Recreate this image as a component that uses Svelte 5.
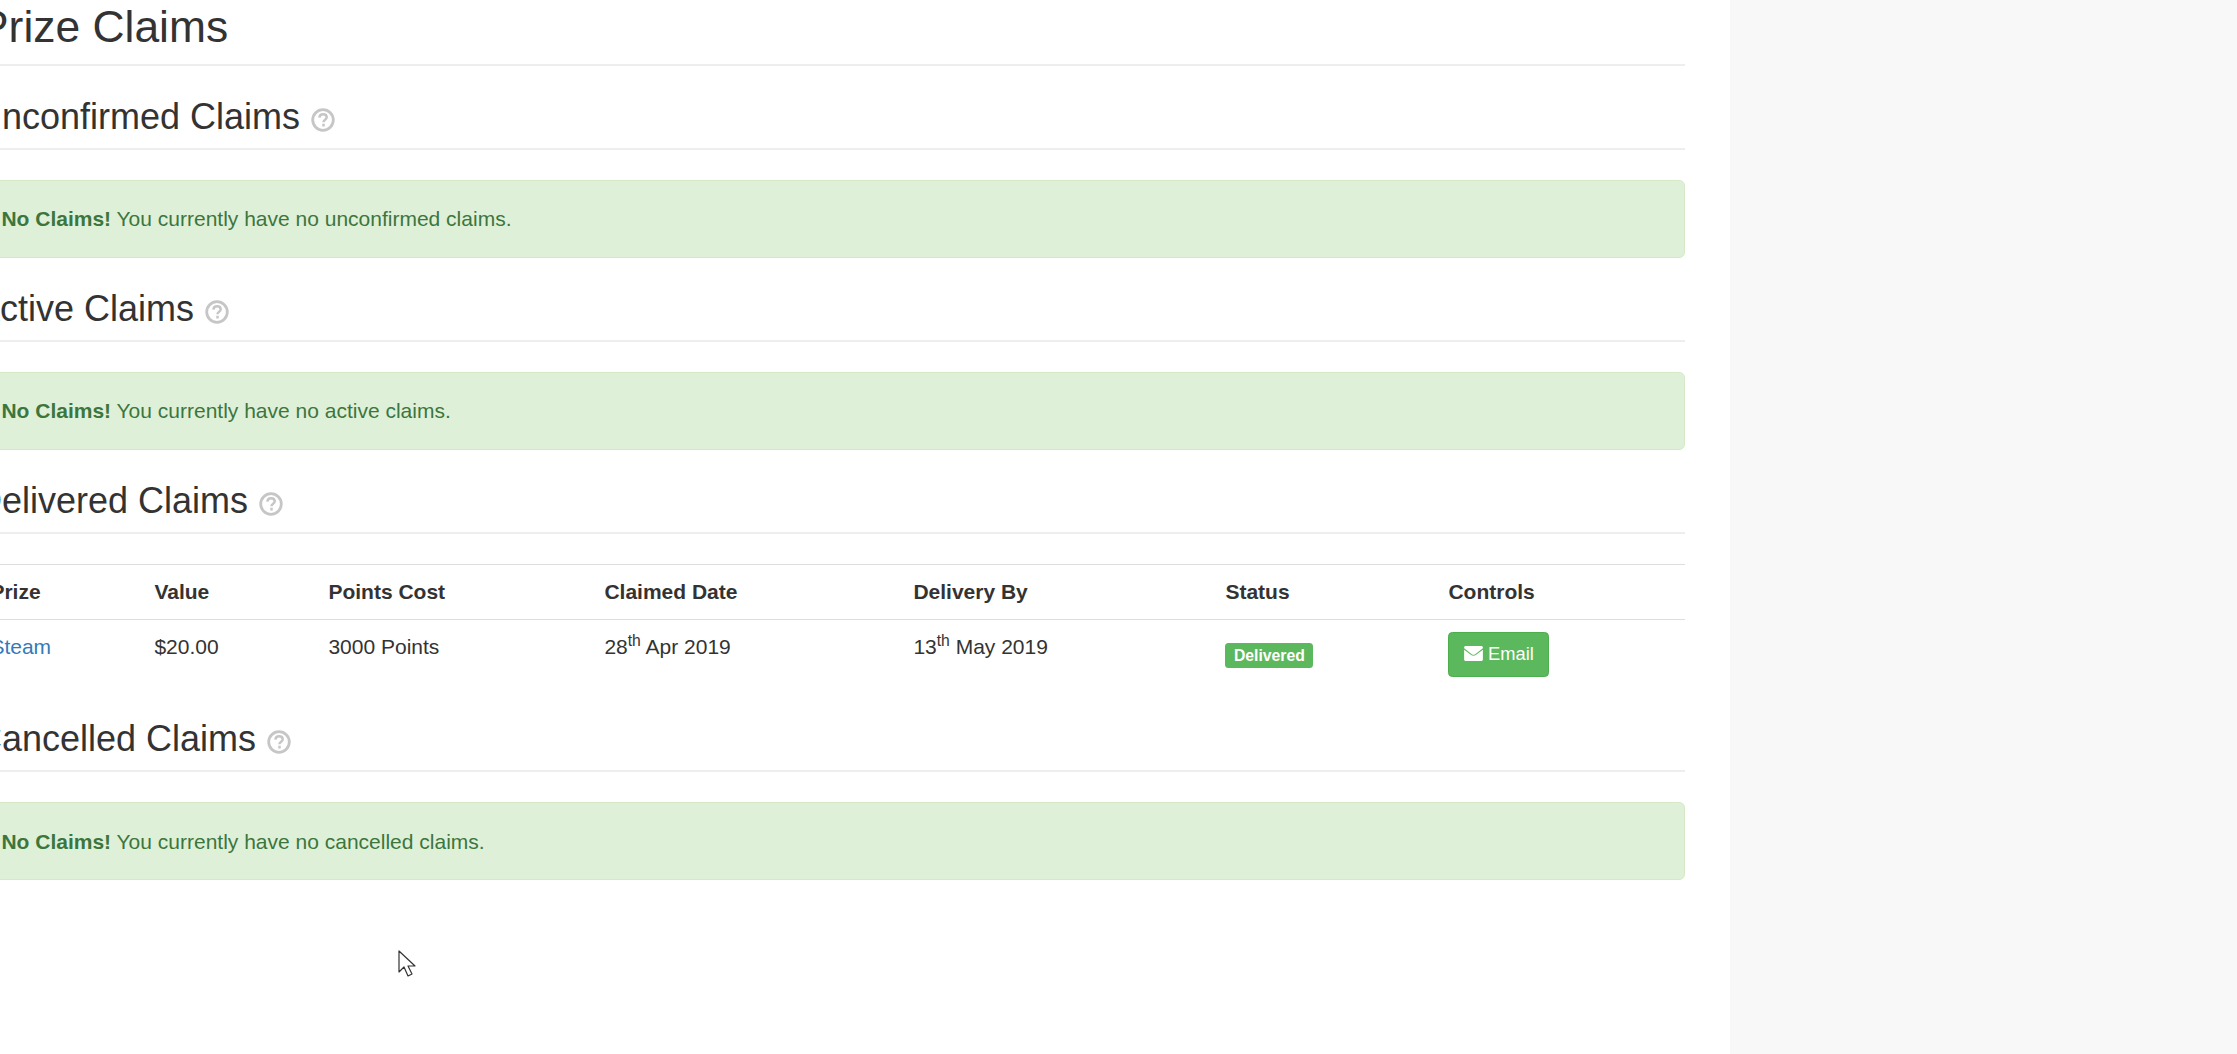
<script>
  const claims = [
    { kind: 'alert', title: 'Unconfirmed Claims', msg: 'You currently have no unconfirmed claims.' },
    { kind: 'alert', title: 'Active Claims', msg: 'You currently have no active claims.' },
    { kind: 'table', title: 'Delivered Claims' },
    { kind: 'alert', title: 'Cancelled Claims', msg: 'You currently have no cancelled claims.' }
  ];
  const heads = ['Prize', 'Value', 'Points Cost', 'Claimed Date', 'Delivery By', 'Status', 'Controls'];
</script>

<div class="page">
  <main class="main">
    <div class="content">
      <h2 class="page-title">Prize Claims</h2>
      {#each claims as c}
        <section class="group">
          <h3 class="sub-title">
            {c.title}
            <svg class="help" viewBox="0 0 24 24" aria-hidden="true">
              <circle cx="12" cy="12" r="10.3" fill="none" stroke="#c6c6c6" stroke-width="2.8" />
              <path d="M8.4 9.6c.2-2 1.7-3.3 3.7-3.3 2.1 0 3.6 1.2 3.6 3 0 1.3-.7 2-1.8 2.7-1 .7-1.4 1.2-1.4 2.3M12.5 15.8v2.6" fill="none" stroke="#c6c6c6" stroke-width="2.5" />
            </svg>
          </h3>
          {#if c.kind === 'alert'}
            <div class="alert"><strong>No Claims!</strong> {c.msg}</div>
          {:else}
            <table class="table">
              <thead>
                <tr>{#each heads as h}<th>{h}</th>{/each}</tr>
              </thead>
              <tbody>
                <tr>
                  <td><a href="#steam">Steam</a></td>
                  <td>$20.00</td>
                  <td>3000 Points</td>
                  <td>28<sup>th</sup> Apr 2019</td>
                  <td>13<sup>th</sup> May 2019</td>
                  <td><span class="label">Delivered</span></td>
                  <td>
                    <button class="btn">
                      <svg class="env" viewBox="0 0 20 16" aria-hidden="true">
                        <path d="M0 1.6C0 .7.7 0 1.6 0h16.8c.9 0 1.6.7 1.6 1.6v.9l-8.2 6.2c-1.1.8-2.5.8-3.6 0L0 2.5z" fill="#fff" />
                        <path d="M0 4v10.4c0 .9.7 1.6 1.6 1.6h16.8c.9 0 1.6-.7 1.6-1.6V4l-7.6 5.7c-1.4 1-3.4 1-4.8 0z" fill="#fff" />
                      </svg>
                      Email
                    </button>
                  </td>
                </tr>
              </tbody>
            </table>
          {/if}
        </section>
      {/each}
    </div>
    <svg class="cursor" viewBox="0 0 18 28" aria-hidden="true">
      <path d="M1 1v21l5-5 4 9 4-2-4-8h7z" fill="#fff" stroke="#333" stroke-width="1.2" stroke-linejoin="round" />
    </svg>
  </main>
  <aside class="side"></aside>
</div>

<style>
  :global(body) {
    margin: 0;
    background: #fff;
    font-family: "Liberation Sans", Arial, sans-serif;
    font-size: 21px;
    line-height: 28.5px;
    color: #333;
    overflow: hidden;
  }
  .page {
    display: flex;
    height: 1054px;
    overflow: hidden;
  }
  .main {
    position: relative;
    flex: 0 0 1730px;
    padding-right: 45px;
    box-sizing: border-box;
    overflow: hidden;
  }
  .content {
    margin-left: -21px;
    padding-top: 3.4px;
  }
  .side {
    flex: 1;
    background: #f8f8f8;
  }
  .page-title {
    margin: 0;
    font-size: 44.4px;
    line-height: 47px;
    font-weight: 400;
    padding-bottom: 13.8px;
    border-bottom: 2px solid #eee;
  }
  .sub-title {
    margin: 31.8px 0 30px;
    font-size: 36px;
    line-height: 37.7px;
    font-weight: 400;
    padding-bottom: 12.4px;
    border-bottom: 2px solid #eee;
    text-indent: -3px;
  }
  .help {
    display: inline-block;
    width: 24px;
    height: 24px;
    vertical-align: -3px;
    margin-left: 0.5px;
  }
  .alert {
    box-sizing: border-box;
    height: 78px;
    padding: 24.4px 21.4px;
    border: 1.4px solid #d6e9c6;
    border-radius: 5.7px;
    background: #dff0d8;
    color: #3c763d;
  }
  .table {
    width: 100%;
    border-collapse: collapse;
    table-layout: fixed;
    margin-bottom: 5.8px;
  }
  th, td {
    padding: 11.4px;
    text-align: left;
    vertical-align: top;
    border-top: 1.4px solid #ddd;
  }
  td { padding-top: 13.4px; }
  th {
    height: 55px;
    box-sizing: border-box;
    vertical-align: bottom;
    font-weight: 700;
    padding-bottom: 12.8px;
    border-bottom: 1.4px solid #ddd;
  }
  th:nth-child(1) { width: 164px; }
  th:nth-child(2) { width: 174px; }
  th:nth-child(3) { width: 276px; }
  th:nth-child(4) { width: 309px; }
  th:nth-child(5) { width: 312px; }
  th:nth-child(6) { width: 223px; }
  a { color: #337ab7; text-decoration: none; }
  sup { font-size: 15.7px; line-height: 0; position: relative; top: -8.5px; vertical-align: baseline; }
  .label {
    display: inline-block;
    background: #5cb85c;
    color: #fff;
    font-size: 15.75px;
    font-weight: 700;
    line-height: 15px;
    padding: 4.6px 8.5px;
    border-radius: 3.5px;
    margin-top: 10.2px;
    vertical-align: top;
  }
  .btn {
    display: block;
    box-sizing: border-box;
    width: 101px;
    height: 45px;
    background: #5cb85c;
    border: 1.4px solid #4cae4c;
    border-radius: 4.3px;
    color: #fff;
    font: inherit;
    font-size: 18.3px;
    padding: 0 0 1px;
    text-align: center;
    margin-top: -1.4px;
  }
  .env {
    width: 19px;
    height: 15px;
    vertical-align: -1px;
  }
  .cursor {
    position: absolute;
    left: 398px;
    top: 950px;
    width: 18px;
    height: 28px;
  }
</style>
